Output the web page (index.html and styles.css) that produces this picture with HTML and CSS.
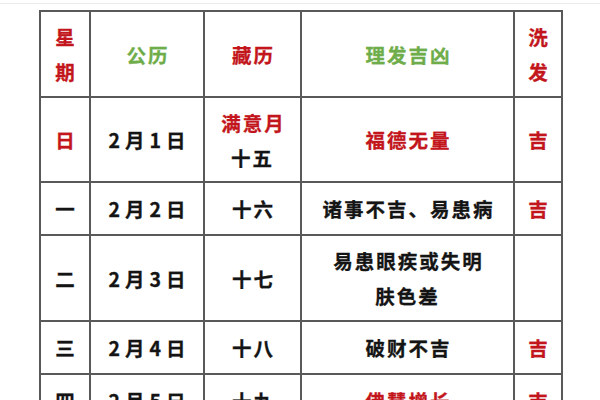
FILE: index.html
```html
<!DOCTYPE html>
<html lang="zh">
<head>
<meta charset="utf-8">
<link rel="stylesheet" href="styles.css">
</head>
<body>
<div class="topbar"></div>
<div class="wrap">
  <div class="grid">
    <div class="cell red narrow">星<br>期</div>
    <div class="cell green">公历</div>
    <div class="cell red">藏历</div>
    <div class="cell green">理发吉凶</div>
    <div class="cell red narrow">洗<br>发</div>

    <div class="cell red">日</div>
    <div class="cell date">2月1日</div>
    <div class="cell"><div><span class="red">满意月</span><br>十五</div></div>
    <div class="cell red">福德无量</div>
    <div class="cell red">吉</div>

    <div class="cell">一</div>
    <div class="cell date">2月2日</div>
    <div class="cell">十六</div>
    <div class="cell">诸事不吉、易患病</div>
    <div class="cell red">吉</div>

    <div class="cell">二</div>
    <div class="cell date">2月3日</div>
    <div class="cell">十七</div>
    <div class="cell">易患眼疾或失明<br>肤色差</div>
    <div class="cell"></div>

    <div class="cell">三</div>
    <div class="cell date">2月4日</div>
    <div class="cell">十八</div>
    <div class="cell">破财不吉</div>
    <div class="cell red">吉</div>

    <div class="cell">四</div>
    <div class="cell date">2月5日</div>
    <div class="cell">十九</div>
    <div class="cell red">佛慧增长</div>
    <div class="cell red">吉</div>
  </div>
</div>
</body>
</html>
```

FILE: styles.css
```css
html, body {
  margin: 0;
  padding: 0;
  background: #ffffff;
  height: 400px;
  overflow: hidden;
}

.topbar {
  height: 3px;
  border-bottom: 1px solid #ececec;
}

.wrap {
  padding: 6px 0 0 39px;
}

.grid {
  display: grid;
  grid-template-columns: 48px 112px 95px 211px 46px;
  grid-template-rows: 84px 83px 51px 84px 51px 51px;
  gap: 2px;
  padding: 2px;
  background: #595959;
  width: 520px;
}

.cell {
  background: #ffffff;
  display: flex;
  align-items: center;
  justify-content: center;
  text-align: center;
  font-family: "Noto Sans CJK SC", "Noto Sans", sans-serif;
  font-weight: 700;
  font-size: 19.5px;
  line-height: 35px;
  letter-spacing: 2px;
  text-indent: 2px;
  color: #141414;
  -webkit-text-stroke: 0.3px currentColor;
}

.red {
  color: #c3161c;
}

.green {
  color: #6fad4a;
}

.date {
  letter-spacing: 5px;
  text-indent: 5px;
}

.narrow {
  letter-spacing: 0;
  text-indent: 0;
}
```
